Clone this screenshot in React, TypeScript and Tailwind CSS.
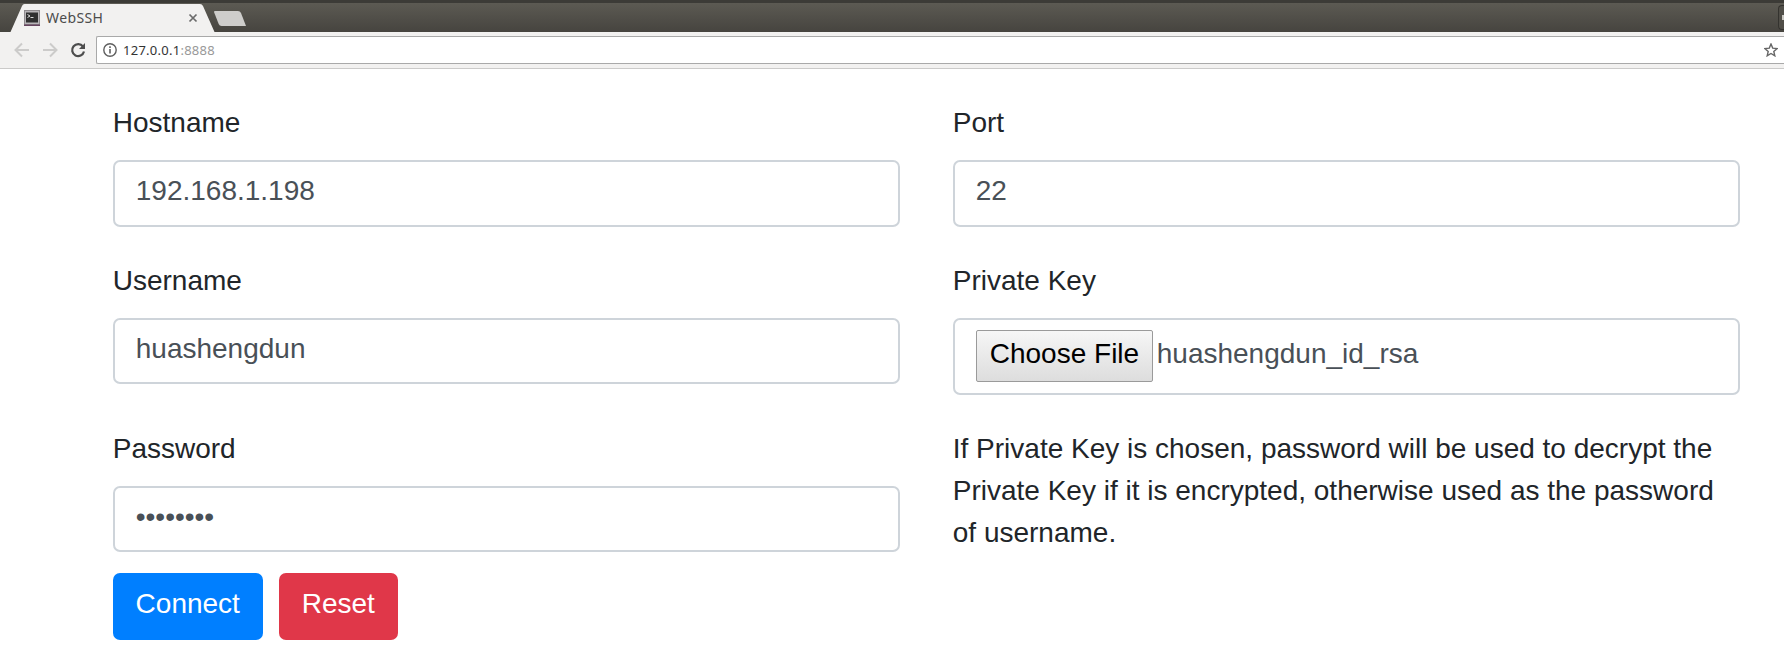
import React from "react";

const inputBox =
  "flex items-start rounded-[7px] border-2 border-[#ced4da] bg-white pl-[21px] pt-2 text-[#495057]";

function Label({ children }: { children: React.ReactNode }) {
  return <div className="mb-4 h-[42px] text-[#212529]">{children}</div>;
}

function BrowserChrome() {
  return (
    <header className="font-['Noto_Sans','Open_Sans',sans-serif]">
      <div className="h-[3px] bg-[#3c3b37]" />
      <div className="flex h-[29px] bg-gradient-to-b from-[#5c5a53] to-[#46443f]">
        <div className="relative h-[29px] w-[248px]">
          <svg className="absolute inset-0" width="248" height="29" viewBox="0 0 248 29">
            <path d="M10.500 29 L22 3 Q22.800 1 24.500 1 H200 Q202 1 203 3 L214.500 29 Z" fill="#f2f1f0" />
            <path d="M214.500 8 H238 Q240 8 241 10 L246 23 H221.500 Q219.500 23 218.700 21 L214 9 Z" fill="#cecdcb" />
            <path d="M189.500 11.500 L196.500 18.500 M196.500 11.500 L189.500 18.500" stroke="#6b6b6b" strokeWidth="1.700" />
            <rect x="24" y="7" width="16" height="15.500" fill="#8f8b8e" />
            <rect x="25" y="8" width="14" height="13" fill="#b8b5b8" />
            <rect x="24" y="21.500" width="16" height="1.500" fill="#66445f" />
            <rect x="26" y="9.500" width="12" height="10" fill="#303030" />
            <path d="M27.500 11.500 l2.500 1.500 -2.500 1.500 M30.500 14.500 h3" stroke="#ddd" strokeWidth="1" fill="none" />
          </svg>
          <span className="absolute left-[46px] top-[5px] text-[14px] leading-[20px] tracking-[0.4px] text-[#4c4c4c]">WebSSH</span>
        </div>
        <div className="ml-auto flex h-[25px] w-[6px] items-center justify-end self-center rounded-l-[4px] border border-r-0 border-[#34332f] bg-[#504e48]">
          <div className="h-[5px] w-[2px] bg-[#c8c6c0]" />
        </div>
      </div>
      <div className="flex h-[37px] items-center border-b border-[#cbcac9] bg-[#f2f1f0]">
        <svg width="96" height="36" viewBox="0 0 96 36" fill="none">
          <path d="M29 18 H16 M22 11.500 L15.500 18 L22 24.500" stroke="#cccbca" strokeWidth="2" />
          <path d="M43 18 H56 M50 11.500 L56.500 18 L50 24.500" stroke="#cccbca" strokeWidth="2" />
          <path d="M83 14.500 A6 6 0 1 0 84 19.500" stroke="#4d4d4d" strokeWidth="2.200" />
          <path d="M85 11 V17 H79 Z" fill="#4d4d4d" />
        </svg>
        <div className="flex h-7 flex-1 items-center rounded-l-[2px] border border-r-0 border-[#a9a9a9] bg-white">
          <svg className="ml-[6px]" width="14" height="14" viewBox="0 0 14 14">
            <circle cx="7" cy="7" r="6.200" fill="none" stroke="#5f5f5f" strokeWidth="1.400" />
            <path d="M7 6 V10.500 M7 3.300 V4.900" stroke="#5f5f5f" strokeWidth="1.600" />
          </svg>
          <span className="ml-[6px] text-[13px] leading-[20px] tracking-[0.26px] text-[#333]">
            127.0.0.1<span className="text-[#999]">:8888</span>
          </span>
          <svg className="ml-auto mr-[6px]" width="14" height="14" viewBox="0 0 14 14">
            <path d="M7 1 L8.700 5.100 L13.100 5.500 L9.800 8.400 L10.800 12.800 L7 10.500 L3.200 12.800 L4.200 8.400 L0.900 5.500 L5.300 5.100 Z" fill="none" stroke="#666" strokeWidth="1.400" />
          </svg>
        </div>
      </div>
    </header>
  );
}

export default function App() {
  return (
    <div className="h-[666px] w-[1784px] overflow-hidden bg-white">
      <BrowserChrome />
      <main className="px-[112.75px] pt-[33px] font-['Liberation_Sans',Arial,sans-serif] text-[28px] leading-[42px]">
        <div className="grid w-[1627px] grid-cols-[787px_787px] grid-rows-[158px_168px_124px] gap-x-[53px]">
          <div>
            <Label>Hostname</Label>
            <div className={`${inputBox} h-[67px]`}>192.168.1.198</div>
          </div>
          <div>
            <Label>Port</Label>
            <div className={`${inputBox} h-[67px]`}>22</div>
          </div>
          <div>
            <Label>Username</Label>
            <div className={`${inputBox} h-[66px]`}>huashengdun</div>
          </div>
          <div>
            <Label>Private Key</Label>
            <div className={`${inputBox} h-[77px]`}>
              <div className="mt-[2px] h-[52px] w-[177px] rounded-[2px] border border-[#9a9a9a] bg-gradient-to-b from-[#f6f6f6] to-[#dddddd] pl-[13px] pt-[2px] text-black">
                Choose File
              </div>
              <span className="ml-1 mt-[5px]">huashengdun_id_rsa</span>
            </div>
          </div>
          <div>
            <Label>Password</Label>
            <div className={`${inputBox} h-[66px]`}>••••••••</div>
          </div>
          <p className="text-[#212529]">
            If Private Key is chosen, password will be used to decrypt the Private Key if it is encrypted, otherwise used as the password of username.
          </p>
        </div>
        <div className="mt-[21px] flex gap-4">
          <button className="flex h-[67px] w-[150px] justify-center rounded-[7px] bg-[#007fff] pt-[10px] text-white">Connect</button>
          <button className="flex h-[67px] w-[119px] justify-center rounded-[7px] bg-[#e03749] pt-[10px] text-white">Reset</button>
        </div>
      </main>
    </div>
  );
}
